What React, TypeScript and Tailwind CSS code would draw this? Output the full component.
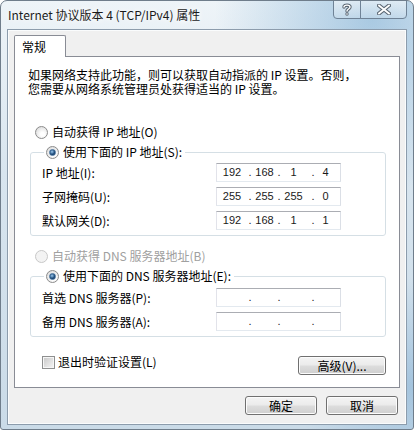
import React from 'react';

const cjk = "font-['Noto_Sans_CJK_SC','Noto_Sans',sans-serif]";

function Radio({ checked, disabled }: { checked?: boolean; disabled?: boolean }) {
  return (
    <span
      className={`flex h-[13px] w-[13px] shrink-0 items-center justify-center rounded-full border ${
        disabled
          ? 'border-[#c8c8c8] bg-[#f3f3f3]'
          : 'border-[#8b8b8b] bg-[radial-gradient(circle_at_60%_65%,#ffffff_20%,#d8d8d8_90%)]'
      }`}
    >
      {checked && (
        <span className="h-[7px] w-[7px] rounded-full border border-[#3d6a97] bg-[radial-gradient(circle_at_40%_35%,#9ccaf0,#22507f_55%,#0f2a4a)]" />
      )}
    </span>
  );
}

function Checkbox() {
  return (
    <span className="flex h-[13px] w-[13px] shrink-0 items-center justify-center border border-[#8e8f8f] bg-[#f6f6f6]">
      <span className="h-[9px] w-[9px] bg-gradient-to-br from-[#cbcbcb] to-[#f2f2f2]" />
    </span>
  );
}

function IpBox({ parts }: { parts?: string[] }) {
  const p = parts ?? ['', '', '', ''];
  return (
    <div className="flex h-[19px] w-[125px] items-center border border-[#abadb3] border-b-[#e3e9ef] border-l-[#e2e3ea] border-r-[#dbdfe6] bg-white font-['Liberation_Sans',sans-serif] text-[11px] leading-[17px] text-[#1a1a1a]">
      <span className="w-[30px] text-center">{p[0]}</span>
      <span className="w-[6px] text-center">.</span>
      <span className="w-[23px] text-center">{p[1]}</span>
      <span className="w-[6px] text-center">.</span>
      <span className="w-[23px] text-center">{p[2]}</span>
      <span className="w-[16px] text-center">.</span>
      <span className="w-[9px] text-center">{p[3]}</span>
    </div>
  );
}

function Row({ label, parts }: { label: string; parts?: string[] }) {
  return (
    <div className="flex h-[19px] items-center">
      <span className="w-[174px] whitespace-nowrap">{label}</span>
      <IpBox parts={parts} />
    </div>
  );
}

function WinButton({ children, w }: { children: React.ReactNode; w: string }) {
  return (
    <button
      className={`${w} flex h-[19px] items-center justify-center rounded-[3px] border border-[#707070] bg-[linear-gradient(180deg,#f4f4f4_0%,#ebebeb_48%,#dddddd_52%,#cfcfcf_100%)] text-[12px] leading-[14px] text-black shadow-[inset_0_0_0_1px_#fcfcfc]`}
    >
      {children}
    </button>
  );
}

export default function App() {
  return (
    <div className={`${cjk} h-[430px] w-[414px] overflow-hidden rounded-t-[7px] rounded-b-[3px] border border-[#6f7d8b] bg-[radial-gradient(ellipse_at_90%_4%,rgba(70,140,195,0.4),transparent_30%),radial-gradient(ellipse_at_100%_90%,rgba(90,150,200,0.35),transparent_20%),linear-gradient(180deg,#eef4f8,#d8e5ef_40%,#cadbe8)] text-[12px] text-black`}>
      {/* title bar */}
      <div className="flex h-[28px] items-start">
        <span className="mt-[6px] pl-[7px] text-[12px] leading-[16px] text-[#1b1b1b] [text-shadow:0_0_6px_#ffffff,0_0_10px_#ffffff]">
          Internet 协议版本 4 (TCP/IPv4) 属性
        </span>
        <div className="ml-auto mr-[6px] -mt-px flex h-[19px]">
          <div className="flex w-[28px] items-center justify-center rounded-bl-[4px] border border-[#6f8296] bg-[linear-gradient(180deg,rgba(255,255,255,0.55),rgba(220,232,242,0.35))]">
            <svg width="10" height="13" viewBox="0 0 10 13">
              <path d="M2 4 C2 1.5 8 1.5 8 4 C8 6 5 6 5 8" fill="none" stroke="#5b6774" strokeWidth="3.4" strokeLinecap="round" />
              <circle cx="5" cy="11" r="1.7" fill="#5b6774" />
              <path d="M2 4 C2 1.5 8 1.5 8 4 C8 6 5 6 5 8" fill="none" stroke="#ffffff" strokeWidth="1.4" strokeLinecap="round" />
              <circle cx="5" cy="11" r="0.8" fill="#ffffff" />
            </svg>
          </div>
          <div className="-ml-px flex w-[47px] items-center justify-center rounded-br-[4px] border border-[#6f8296] bg-[linear-gradient(180deg,rgba(255,255,255,0.55),rgba(220,232,242,0.35))]">
            <svg width="14" height="11" viewBox="0 0 14 11">
              <path d="M2 1.5 L12 9.5 M12 1.5 L2 9.5" stroke="#5b6774" strokeWidth="4" strokeLinecap="square" />
              <path d="M2 1.5 L12 9.5 M12 1.5 L2 9.5" stroke="#ffffff" strokeWidth="1.8" strokeLinecap="square" />
            </svg>
          </div>
        </div>
      </div>

      {/* client area */}
      <div className="ml-[6px] h-[396px] w-[400px] border border-[#8c9cac] bg-[#f0f0f0] shadow-[inset_0_0_0_1px_#fafcfd]">
        <div className="pl-[6px] pt-[5px]">
          <div className="flex h-[21px]">
            <div className="relative z-10 flex h-[22px] w-[52px] items-center rounded-t-[2px] border border-b-0 border-[#898c95] bg-white pl-[7px] leading-[14px]">
              常规
            </div>
          </div>

          <div className="h-[332px] w-[386px] border border-[#898c95] bg-white">
            <p className="mt-[11px] whitespace-nowrap pl-[13px] leading-[14px]">
              如果网络支持此功能，则可以获取自动指派的 IP 设置。否则，
              <br />
              您需要从网络系统管理员处获得适当的 IP 设置。
            </p>

            <div className="mt-[28px] flex h-[16px] items-center gap-[4px] pl-[20px] leading-[16px]">
              <Radio />
              <span>自动获得 IP 地址(O)</span>
            </div>

            <fieldset className="ml-[15px] mr-[13px] mt-[4px] rounded-[3px] border border-[#d5dfe5] pb-[5px] pl-[11px] pt-[3px]">
              <legend className="ml-[2px] pl-[2px] pr-[3px] leading-[16px]">
                <span className="flex h-[16px] items-center gap-[4px]">
                  <Radio checked />
                  <span>使用下面的 IP 地址(S):</span>
                </span>
              </legend>
              <div className="flex flex-col gap-[5px]">
                <Row label="IP 地址(I):" parts={['192', '168', '1', '4']} />
                <Row label="子网掩码(U):" parts={['255', '255', '255', '0']} />
                <Row label="默认网关(D):" parts={['192', '168', '1', '1']} />
              </div>
            </fieldset>

            <div className="mt-[12px] flex h-[16px] items-center gap-[4px] pl-[20px] leading-[16px] text-[#a0a0a0]">
              <Radio disabled />
              <span>自动获得 DNS 服务器地址(B)</span>
            </div>

            <fieldset className="ml-[15px] mr-[13px] mt-[4px] rounded-[3px] border border-[#d5dfe5] pb-[5px] pl-[11px] pt-[4px]">
              <legend className="ml-[2px] pl-[2px] pr-[3px] leading-[16px]">
                <span className="flex h-[16px] items-center gap-[4px]">
                  <Radio checked />
                  <span>使用下面的 DNS 服务器地址(E):</span>
                </span>
              </legend>
              <div className="flex flex-col gap-[5px]">
                <Row label="首选 DNS 服务器(P):" />
                <Row label="备用 DNS 服务器(A):" />
              </div>
            </fieldset>

            <div className="mt-[18px] flex items-start pl-[27px] pr-[13px]">
              <span className="flex h-[14px] items-center gap-[3px] leading-[14px]">
                <Checkbox />
                <span>退出时验证设置(L)</span>
              </span>
              <div className="ml-auto mt-[1px]">
                <WinButton w="w-[88px]">高级(V)...</WinButton>
              </div>
            </div>
          </div>

          <div className="mt-[8px] flex justify-end gap-[9px] pr-[8px]">
            <WinButton w="w-[72px]">确定</WinButton>
            <WinButton w="w-[72px]">取消</WinButton>
          </div>
        </div>
      </div>
    </div>
  );
}
